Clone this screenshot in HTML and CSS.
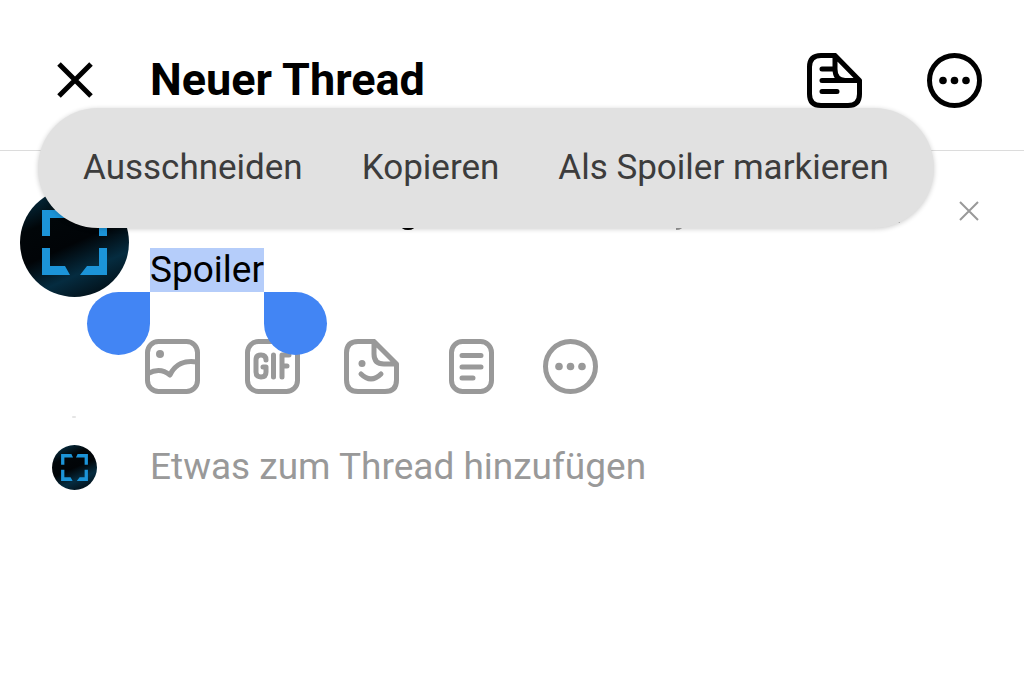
FILE: index.html
```html
<!DOCTYPE html>
<html lang="de">
<head>
<meta charset="UTF-8">
<meta name="viewport" content="width=device-width, initial-scale=1">
<title>Neuer Thread</title>
<link rel="stylesheet" href="styles.css">
</head>
<body>
    <svg class="defs" aria-hidden="true">
        <defs>
            <linearGradient id="avatarFill" x1="0.15" y1="0" x2="0.6" y2="1">
                <stop offset="0" stop-color="#05334a"/>
                <stop offset="0.3" stop-color="#010609"/>
                <stop offset="0.55" stop-color="#010407"/>
                <stop offset="0.8" stop-color="#052c40"/>
                <stop offset="1" stop-color="#03141e"/>
            </linearGradient>
            <symbol id="avatar" viewBox="0 0 109 109">
                <circle cx="54.5" cy="54.5" r="54.5" fill="url(#avatarFill)"/>
                <path fill="#1c94d8" d="M22 48V22H47L51 30H30V48ZM87 48V22H62L58 30H79V48ZM22 60H30V78H45L50 87H22ZM87 60H79V78H67L60 87H87Z"/>
            </symbol>
            <symbol id="dots" viewBox="0 0 55 55">
                <circle cx="27.5" cy="27.5" r="25" fill="none" stroke="currentColor" stroke-width="5"/>
                <g fill="currentColor">
                    <circle cx="16" cy="27.5" r="3.8"/>
                    <circle cx="27.5" cy="27.5" r="3.8"/>
                    <circle cx="39" cy="27.5" r="3.8"/>
                </g>
            </symbol>
        </defs>
    </svg>

    <header class="header">
        <button class="icon-button close" type="button" aria-label="Schließen">
            <svg width="36" height="36" viewBox="0 0 36 36"><path d="M2 2L34 34M34 2L2 34" stroke-width="5"/></svg>
        </button>
        <h1>Neuer Thread</h1>
        <div class="header-actions">
            <button class="icon-button" type="button" aria-label="Entwürfe">
                <svg width="55" height="55" viewBox="0 0 55 55">
                    <path stroke-width="5" d="M28 2.5H14Q2.5 2.5 2.5 14V41Q2.5 52.5 14 52.5H41Q52.5 52.5 52.5 41V27.5L28 2.5V16Q28 27 38 27.5"/>
                    <path stroke-width="5" stroke-linecap="round" d="M15 16H27M15 27.5H51M15 38.5H30"/>
                </svg>
            </button>
            <button class="icon-button" type="button" aria-label="Mehr">
                <svg width="55" height="55"><use href="#dots"/></svg>
            </button>
        </div>
    </header>

    <main>
        <section class="post">
            <svg class="avatar" width="109" height="109"><use href="#avatar"/></svg>
            <div class="post-body">
                <div class="post-top">
                    <svg class="descenders" width="760" height="42" viewBox="0 0 760 42" aria-hidden="true">
                        <path fill="#000" d="M250 36H266Q265 42 258 42Q251 42 250 36Z"/>
                        <path fill="#999" d="M528 36H534Q533 42 526 42V39Q528 39 528 36Z"/>
                        <circle fill="#999" cx="749" cy="34" r="1"/>
                    </svg>
                    <button class="icon-button remove" type="button" aria-label="Entfernen">
                        <svg width="22" height="22" viewBox="0 0 22 22"><path d="M2 2L20 20M20 2L2 20" stroke-width="2"/></svg>
                    </button>
                </div>
                <div class="post-text" contenteditable="true" role="textbox" aria-label="Beitrag" spellcheck="false"><mark class="selection">Spoiler<span class="handle handle-start"></span><span class="handle handle-end"></span></mark></div>
                <div class="attachments">
                    <button class="icon-button" type="button" aria-label="Bild">
                        <svg width="55" height="55" viewBox="0 0 55 55">
                            <rect x="2.5" y="2.5" width="50" height="50" rx="11" stroke-width="5"/>
                            <path stroke-width="5" d="M3 34.5C11 30 19 31 25 36C30 25 40 21 52 23"/>
                            <circle cx="15" cy="15" r="4" class="solid"/>
                        </svg>
                    </button>
                    <button class="icon-button" type="button" aria-label="GIF">
                        <svg width="55" height="55" viewBox="0 0 55 55">
                            <rect x="2.5" y="2.5" width="50" height="50" rx="11" stroke-width="5"/>
                            <path stroke-width="5" stroke-linecap="round" d="M21 21Q21 16 16 16Q11 16 11 21V33Q11 38 16 38Q21 38 21 33V28H18M28.5 16V38M37 38V16H44M37 27H42"/>
                        </svg>
                    </button>
                    <button class="icon-button" type="button" aria-label="Sticker">
                        <svg width="55" height="55" viewBox="0 0 55 55">
                            <path stroke-width="5" d="M30 2.5H14Q2.5 2.5 2.5 14V41Q2.5 52.5 14 52.5H41Q52.5 52.5 52.5 41V25L30 2.5V15Q30 25 40 25H52.5"/>
                            <path stroke-width="5" stroke-linecap="round" d="M17 35Q27 45 37 35"/>
                            <circle cx="18" cy="24.5" r="3.5" class="solid"/>
                        </svg>
                    </button>
                    <button class="icon-button" type="button" aria-label="Text">
                        <svg width="55" height="55" viewBox="0 0 55 55">
                            <rect x="7.5" y="2.5" width="40" height="50" rx="11" stroke-width="5"/>
                            <path stroke-width="5" stroke-linecap="round" d="M18 16.5H37M18 28H37M18 39H29"/>
                        </svg>
                    </button>
                    <button class="icon-button" type="button" aria-label="Weitere Optionen">
                        <svg width="55" height="55"><use href="#dots"/></svg>
                    </button>
                </div>
            </div>
        </section>

        <div class="thread-line"></div>

        <div class="add-row">
            <svg class="avatar-small" width="45" height="45"><use href="#avatar"/></svg>
            <input class="add-input" type="text" placeholder="Etwas zum Thread hinzufügen" aria-label="Etwas zum Thread hinzufügen">
        </div>
    </main>

    <div class="selection-menu" role="toolbar">
        <button type="button">Ausschneiden</button>
        <button type="button">Kopieren</button>
        <button type="button">Als Spoiler markieren</button>
    </div>
</body>
</html>
```
FILE: styles.css
```css
* {
    box-sizing: border-box;
}

body {
    margin: 0;
    background-color: #fff;
    color: #000;
    font-family: Roboto, sans-serif;
    font-size: 37px;
}

button {
    padding: 0;
    border: none;
    background: none;
    font: inherit;
    cursor: pointer;
}

.defs {
    position: absolute;
    width: 0;
    height: 0;
}

.icon-button {
    display: flex;
    color: inherit;
}

.icon-button svg {
    fill: none;
    stroke: currentColor;
    stroke-linejoin: round;
}

.icon-button use {
    stroke: none;
}

.icon-button .solid {
    fill: currentColor;
    stroke: none;
}

/* header */

.header {
    display: flex;
    align-items: center;
    padding: 52px 42px 42px 20px;
    border-bottom: 1px solid #dcdcdc;
}

.close {
    justify-content: center;
    width: 110px;
    margin-right: 20px;
}

h1 {
    margin: 0;
    font-size: 45px;
    line-height: 56px;
    font-weight: 700;
}

.header-actions {
    display: flex;
    gap: 65px;
    margin-left: auto;
}

/* post */

.post {
    display: flex;
    gap: 21px;
    padding: 37px 44px 0 20px;
}

.avatar {
    flex: none;
}

.post-body {
    flex: 1;
}

.post-top {
    display: flex;
    justify-content: space-between;
    height: 60px;
}

.remove {
    align-items: center;
    height: 46px;
    color: #999;
}

.post-text {
    line-height: 44px;
    outline: none;
}

.selection {
    position: relative;
    display: inline-block;
    background-color: #b5cdfa;
    color: #000;
}

.handle {
    position: absolute;
    top: 100%;
    width: 63px;
    height: 63px;
    background-color: #4285f4;
}

.handle-start {
    right: 100%;
    border-radius: 50% 0 50% 50%;
}

.handle-end {
    left: 100%;
    border-radius: 0 50% 50% 50%;
}

.attachments {
    display: flex;
    justify-content: space-between;
    width: 453px;
    margin: 47px 0 0 -5px;
    color: #999;
}

/* add to thread */

.thread-line {
    width: 4px;
    height: 2px;
    margin: 22px 0 0 72px;
    border-radius: 1px;
    background-color: #e5e5e5;
}

.add-row {
    display: flex;
    align-items: center;
    gap: 53px;
    margin-top: 21px;
    padding: 0 44px 0 52px;
}

.avatar-small {
    flex: none;
}

.add-input {
    flex: 1;
    min-width: 0;
    padding: 0;
    border: none;
    outline: none;
    background: none;
    font: inherit;
    line-height: 56px;
}

.add-input::placeholder {
    color: #999;
    opacity: 1;
}

/* floating menu over the selected text */

.selection-menu {
    position: absolute;
    top: 108px;
    left: 38px;
    display: flex;
    gap: 59px;
    padding: 0 45px;
    border-radius: 60px;
    background-color: #e1e1e1;
    box-shadow: 0 1px 5px rgba(0, 0, 0, 0.2);
    color: #3c3c3c;
    font-size: 35px;
    white-space: nowrap;
}

.selection-menu button {
    color: inherit;
    line-height: 120px;
}
```
